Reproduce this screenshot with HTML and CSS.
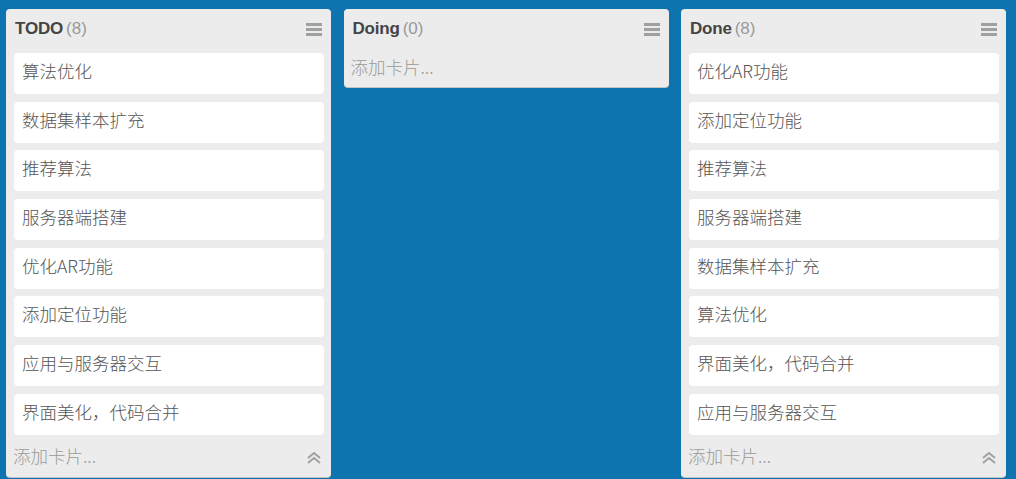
FILE: index.html
```html
<!DOCTYPE html>
<html>
<head>
<title>看板</title>
<meta charset="utf-8">
<link rel="stylesheet" href="styles.css">
</head>
<body>

<div class="board">

  <!-- TODO list -->
  <div class="list">
    <div class="list-header">
      <span class="list-title">TODO</span><span class="list-count">(8)</span>
      <svg class="menu-icon" width="16" height="13" viewBox="0 0 16 13"><rect x="0" y="0" width="16" height="3"/><rect x="0" y="5" width="16" height="3"/><rect x="0" y="10" width="16" height="3"/></svg>
    </div>
    <div class="list-cards">
      <div class="card">算法优化</div>
      <div class="card">数据集样本扩充</div>
      <div class="card">推荐算法</div>
      <div class="card">服务器端搭建</div>
      <div class="card">优化AR功能</div>
      <div class="card">添加定位功能</div>
      <div class="card">应用与服务器交互</div>
      <div class="card">界面美化，代码合并</div>
    </div>
    <div class="list-footer">
      <span class="add-card">添加卡片...</span>
      <svg class="collapse-icon" width="14" height="12" viewBox="0 0 14 12"><path d="M1 6 L7 1 L13 6"/><path d="M1 11 L7 6 L13 11"/></svg>
    </div>
  </div>

  <!-- Doing list (empty) -->
  <div class="list">
    <div class="list-header">
      <span class="list-title">Doing</span><span class="list-count">(0)</span>
      <svg class="menu-icon" width="16" height="13" viewBox="0 0 16 13"><rect x="0" y="0" width="16" height="3"/><rect x="0" y="5" width="16" height="3"/><rect x="0" y="10" width="16" height="3"/></svg>
    </div>
    <div class="list-footer">
      <span class="add-card">添加卡片...</span>
    </div>
  </div>

  <!-- Done list -->
  <div class="list">
    <div class="list-header">
      <span class="list-title">Done</span><span class="list-count">(8)</span>
      <svg class="menu-icon" width="16" height="13" viewBox="0 0 16 13"><rect x="0" y="0" width="16" height="3"/><rect x="0" y="5" width="16" height="3"/><rect x="0" y="10" width="16" height="3"/></svg>
    </div>
    <div class="list-cards">
      <div class="card">优化AR功能</div>
      <div class="card">添加定位功能</div>
      <div class="card">推荐算法</div>
      <div class="card">服务器端搭建</div>
      <div class="card">数据集样本扩充</div>
      <div class="card">算法优化</div>
      <div class="card">界面美化，代码合并</div>
      <div class="card">应用与服务器交互</div>
    </div>
    <div class="list-footer">
      <span class="add-card">添加卡片...</span>
      <svg class="collapse-icon" width="14" height="12" viewBox="0 0 14 12"><path d="M1 6 L7 1 L13 6"/><path d="M1 11 L7 6 L13 11"/></svg>
    </div>
  </div>

</div>

</body>
</html>
```

FILE: styles.css
```css
body {
  margin: 0;
  height: 479px;
  overflow: hidden;
  background-color: #0e74af;
  font-family: "Liberation Sans", "Noto Sans CJK SC", sans-serif;
}

/* the three columns side by side */
.board {
  display: flex;
  align-items: flex-start;
  gap: 12.5px;
  padding: 9px 0 0 6px;
}

.list {
  width: 325px;
  flex-shrink: 0;
  background-color: #ececec;
  border-radius: 4px;
  box-shadow: 0 1px 0 #c2c2c2;
}

/* list title row */
.list-header {
  display: flex;
  align-items: center;
  padding: 8px 9px 4px 9px;
  line-height: 24px;
}

.list-title {
  font-size: 17px;
  font-weight: bold;
  color: #444;
  letter-spacing: -0.2px;
}

.list-count {
  font-size: 17px;
  color: #999;
  margin-left: 3px;
}

.menu-icon {
  margin-left: auto;
  fill: #a0a0a0;
}

/* cards */
.list-cards {
  display: flex;
  flex-direction: column;
  gap: 7.7px;
  padding: 8px 7px 0 8px;
}

.card {
  background-color: #fff;
  border-radius: 4px;
  padding: 7px 8px 13px 8px;
  line-height: 21px;
  font-size: 17.5px;
  font-weight: 300;
  color: #555;
  font-family: "Noto Sans CJK SC", "Liberation Sans", sans-serif;
}

/* add card row at the bottom */
.list-footer {
  box-sizing: border-box;
  height: 42px;
  padding: 0 10px 0 7px;
  display: flex;
  align-items: center;
}

.add-card {
  font-size: 17.5px;
  font-weight: 300;
  color: #9a9a9a;
  font-family: "Noto Sans CJK SC", "Liberation Sans", sans-serif;
}

.collapse-icon {
  margin-left: auto;
  margin-top: 4px;
  fill: none;
  stroke: #a0a0a0;
  stroke-width: 2;
}
```
